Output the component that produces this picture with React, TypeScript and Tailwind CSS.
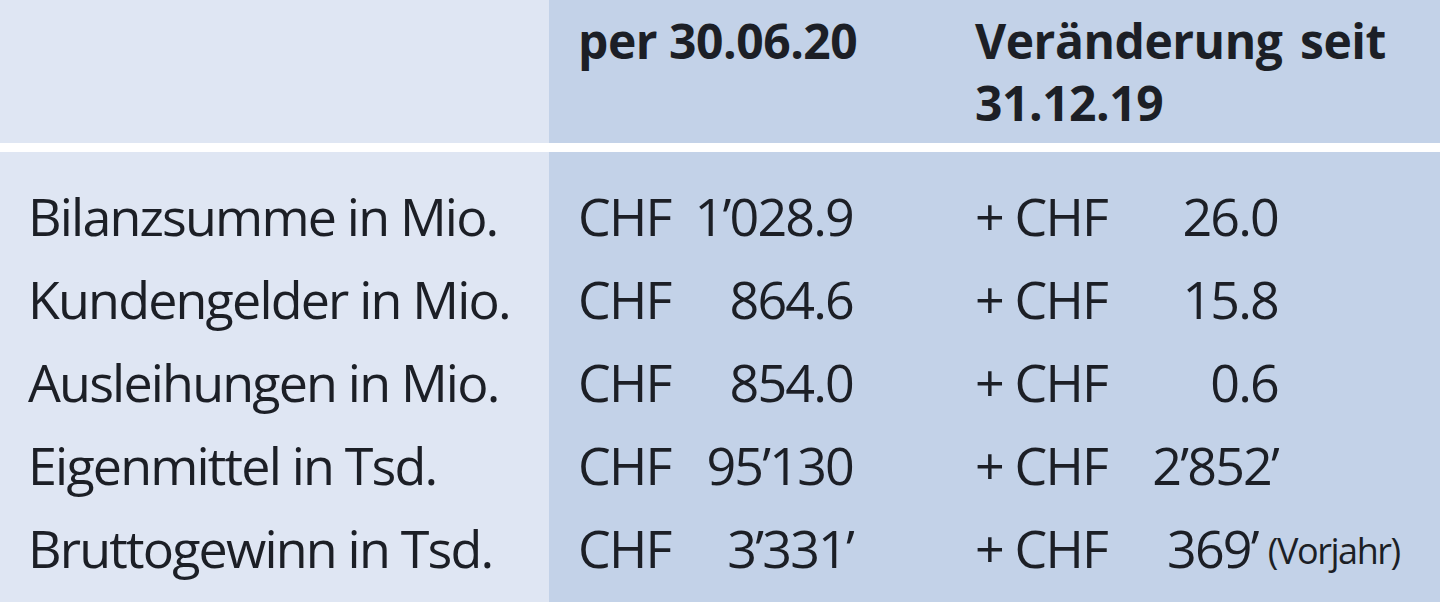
const ROWS = [
  { label: "Bilanzsumme in Mio.", value: "1’028.9", change: "26.0" },
  { label: "Kundengelder in Mio.", value: "864.6", change: "15.8" },
  { label: "Ausleihungen in Mio.", value: "854.0", change: "0.6" },
  { label: "Eigenmittel in Tsd.", value: "95’130", change: "2’852’" },
  { label: "Bruttogewinn in Tsd.", value: "3’331’", change: "369’", note: "(Vorjahr)" },
];

export default function App() {
  return (
    <div
      className="w-[1440px] h-[602px] overflow-hidden bg-[#c3d2e8] text-[#1c1f26]"
      style={{ fontFamily: "'Open Sans', 'Noto Sans', sans-serif" }}
    >
      {/* header */}
      <div className="grid grid-cols-[549px_397px_1fr] h-[143px]">
        <div className="bg-[#dfe6f3]" />
        <div className="pl-[29px] pt-[10px] text-[48px] font-bold leading-[62px] tracking-[-0.01em]">
          per 30.06.20
        </div>
        <div className="pl-[29px] pt-[10px] text-[48px] font-bold leading-[62px] tracking-[-0.01em] [word-spacing:0.12em]">
          Veränderung seit
          <br />
          31.12.19
        </div>
      </div>

      <div className="h-[9px] bg-white" />

      {/* body */}
      <div className="grid grid-cols-[549px_397px_1fr] h-[450px]">
        <div className="bg-[#dfe6f3] pt-[22px] pl-[28px]">
          {ROWS.map((r) => (
            <div key={r.label} className="h-[83px] flex items-center text-[52px] tracking-[-0.035em] whitespace-nowrap">
              {r.label}
            </div>
          ))}
        </div>
        <div className="pt-[22px] pl-[29px]">
          {ROWS.map((r) => (
            <div key={r.label} className="h-[83px] w-[275px] flex items-center justify-between text-[52px] tracking-[-0.035em] whitespace-nowrap">
              <span>CHF</span>
              <span>{r.value}</span>
            </div>
          ))}
        </div>
        <div className="pt-[22px] pl-[29px]">
          {ROWS.map((r) =>
            r.note ? (
              <div key={r.label} className="h-[83px] flex items-center text-[52px] tracking-[-0.035em] whitespace-nowrap">
                <span className="w-[192px]">+ CHF</span>
                <span>{r.change}</span>
                <span className="ml-[10px] mt-[6px] text-[36px] tracking-[-0.04em]">{r.note}</span>
              </div>
            ) : (
              <div key={r.label} className="h-[83px] w-[303px] flex items-center justify-between text-[52px] tracking-[-0.035em] whitespace-nowrap">
                <span>+ CHF</span>
                <span>{r.change}</span>
              </div>
            )
          )}
        </div>
      </div>
    </div>
  );
}
